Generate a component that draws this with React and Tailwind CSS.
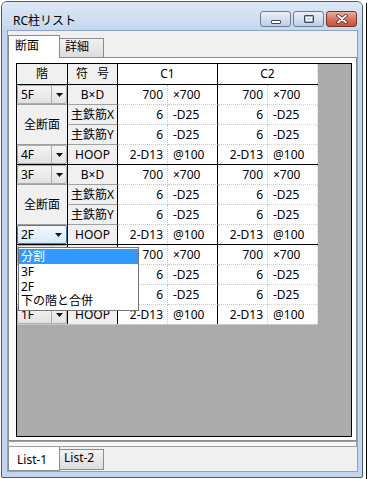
import React from "react";

const rows = [
  ["B×D", "700", "×700", "700", "×700"],
  ["主鉄筋X", "6", "-D25", "6", "-D25"],
  ["主鉄筋Y", "6", "-D25", "6", "-D25"],
  ["HOOP", "2-D13", "@100", "2-D13", "@100"],
];

// the third group sits under the open dropdown, so its left labels are hidden there
const groups = [
  { top: "5F", bottom: "4F", label: "全断面" },
  { top: "3F", bottom: "2F", focused: true, label: "全断面" },
  { top: "", bottom: "1F", end: true, label: "", covered: true },
];

const Arrow = () => (
  <svg width="7" height="4" viewBox="0 0 7 4">
    <path d="M0 0h7L3.5 4z" fill="#111" />
  </svg>
);

const Combo = ({ value, focused }) => (
  <div
    className={
      focused
        ? "h-full flex items-center border border-[#3c7fb1] rounded-[2px] bg-linear-to-b from-[#f3f9fe] to-[#d3e9f9]"
        : "h-full flex items-center border border-[#acacac] rounded-[2px] bg-linear-to-b from-[#f5f5f5] to-[#e2e2e2]"
    }
  >
    <span className="flex-1 pl-[3px] text-[12px] leading-[14px]">{value}</span>
    <span
      className={
        focused
          ? "w-[15px] h-full flex items-center justify-center"
          : "w-[15px] h-full flex items-center justify-center border-l border-[#acacac]"
      }
    >
      <Arrow />
    </span>
  </div>
);

const DataRow = ({ r, last, hideLabel }) => (
  <div className={last ? "flex h-[19px]" : "flex h-[20px]"}>
    <div
      className={
        "w-[50px] flex items-center justify-center bg-[#f0f0f0] border-r border-r-black border-b-[#a0a0a0] " +
        (last ? "" : "border-b")
      }
    >
      {hideLabel ? "" : r[0]}
    </div>
    <div
      className={
        "w-[50px] flex items-center justify-end pr-[4px] bg-white border-r border-[#c8c8c8] border-dotted " +
        (last ? "" : "border-b")
      }
    >
      {r[1]}
    </div>
    <div
      className={
        "w-[50px] flex items-center pl-[5px] bg-white border-r border-r-black border-b-[#c8c8c8] [border-bottom-style:dotted] " +
        (last ? "" : "border-b")
      }
    >
      {r[2]}
    </div>
    <div
      className={
        "w-[50px] flex items-center justify-end pr-[4px] bg-white border-r border-[#c8c8c8] border-dotted " +
        (last ? "" : "border-b")
      }
    >
      {r[3]}
    </div>
    <div
      className={
        "w-[50px] flex items-center pl-[5px] bg-white border-r border-[#d0d0d0] border-dotted " +
        (last ? "" : "border-b")
      }
    >
      {r[4]}
    </div>
  </div>
);

const Group = ({ g }) => (
  <div
    className={
      g.end
        ? "flex h-[80px] border-b border-[#c8c8c8]"
        : "flex h-[80px] border-b border-black"
    }
  >
    <div className="w-[51px] flex flex-col bg-[#f0f0f0] border-r border-black">
      <div className="h-[20px] border-b border-[#a0a0a0]">
        <Combo value={g.top} />
      </div>
      <div className="h-[40px] flex items-center justify-center border-b border-[#a0a0a0]">
        {g.label}
      </div>
      <div className="h-[19px]">
        <Combo value={g.bottom} focused={g.focused} />
      </div>
    </div>
    <div className="flex flex-col">
      {rows.map((r, i) => (
        <DataRow key={i} r={r} last={i === 3} hideLabel={g.covered && i < 3} />
      ))}
    </div>
  </div>
);

const TitleButton = ({ kind }) => {
  if (kind === "close") {
    return (
      <div className="w-[31px] h-[16px] rounded-[3px] border border-[#7b3328] bg-linear-to-b from-[#eab1a5] via-[#d77462] to-[#c4513b] flex items-center justify-center">
        <svg width="12" height="10" viewBox="0 0 12 10">
          <path d="M2 1.5l8 7M10 1.5l-8 7" stroke="#5a2018" strokeWidth="3.4" strokeLinecap="round" />
          <path d="M2 1.5l8 7M10 1.5l-8 7" stroke="#fff" strokeWidth="1.8" strokeLinecap="round" />
        </svg>
      </div>
    );
  }
  return (
    <div className="w-[31px] h-[16px] rounded-[3px] border border-[#6b7c93] bg-linear-to-b from-[#e8eff8] to-[#bfd0e5] flex items-center justify-center">
      {kind === "min" ? (
        <div className="mt-[6px] w-[10px] h-[4px] border border-[#3d4a5c] bg-white rounded-[1px]" />
      ) : (
        <div className="w-[10px] h-[8px] border border-[#3d4a5c] bg-[#9fb3cc] flex items-center justify-center rounded-[1px]">
          <div className="w-[6px] h-[4px] border border-white bg-[#c5d4e6]" />
        </div>
      )}
    </div>
  );
};

export default function App() {
  return (
    <div className="w-[368px] h-[479px] bg-white flex font-['Noto_Sans','Noto_Sans_CJK_JP',sans-serif] text-black text-[12px]">
      <div className="ml-[1px] mt-[1px] w-[362px] h-[477px] flex flex-col border border-[#4b5b70] rounded-t-[6px] rounded-b-[2px] bg-[#c3d6ee] overflow-hidden">
        {/* title bar */}
        <div className="h-[28px] flex items-start bg-linear-to-b from-[#dde8f5] to-[#c6d8ee]">
          <span className="ml-[11px] mt-[12px] text-[12px] leading-[14px]">RC柱リスト</span>
          <div className="ml-auto mr-[5px] mt-[9px] flex gap-[2px]">
            <TitleButton kind="min" />
            <TitleButton kind="max" />
            <TitleButton kind="close" />
          </div>
        </div>

        {/* client */}
        <div className="ml-[5px] mr-[4px] h-[442px] border border-[#8da4c0] bg-[#f0f0f0] flex flex-col">
          <div className="pt-[4px]">
            <div className="h-[23px] -mb-px flex items-end relative z-10">
              <div className="w-[52px] h-[23px] bg-white border-x border-t border-[#898c95] pl-[6px] pt-[3px] leading-[14px]">
                断面
              </div>
              <div className="w-[44px] h-[20px] border-t border-r border-b border-[#898c95] bg-linear-to-b from-[#f3f3f3] to-[#dcdcdc] pl-[5px] pt-px leading-[14px]">
                詳細
              </div>
            </div>
          </div>

          <div className="h-[384px] bg-white border border-[#898c95] pl-[7px] pt-[5px]">
            <div className="w-[336px] h-[374px] border border-black bg-[#ababab] relative leading-[14px]">
              <div className="w-[301px] flex flex-col">
                <div className="flex h-[21px] border-b border-black">
                  <div className="w-[51px] flex items-center justify-center bg-[#f0f0f0] border-r border-black">階</div>
                  <div className="w-[50px] flex items-center justify-center gap-[9px] bg-[#f0f0f0] border-r border-black">
                    <span>符</span>
                    <span>号</span>
                  </div>
                  <div className="w-[100px] flex items-center justify-center bg-white border-r border-black">C1</div>
                  <div className="w-[100px] flex items-center justify-center bg-white border-r border-[#d0d0d0] border-dotted">C2</div>
                </div>
                {groups.map((g, i) => (
                  <Group key={i} g={g} />
                ))}
              </div>

              {/* open dropdown of the 2F combo */}
              <div className="absolute left-[1px] top-[183px] w-[121px] h-[64px] bg-white border border-[#767676] py-px flex flex-col">
                <div className="h-[15px] bg-[#3399ff] text-white pl-[2px] pt-px leading-[14px]">分割</div>
                <div className="h-[15px] pl-[2px] pt-px leading-[14px]">3F</div>
                <div className="h-[15px] pl-[2px] pt-px leading-[14px]">2F</div>
                <div className="h-[15px] pl-[2px] leading-[14px]">下の階と合併</div>
              </div>
            </div>
          </div>

          <div className="h-[6px] border border-[#a0a0a0] bg-[#f7f7f7]" />

          <div className="h-[24px] flex items-start">
            <div className="w-[52px] h-[24px] bg-white border-x border-b border-[#898c95] pl-[8px] pt-[6px] leading-[14px]">
              List-1
            </div>
            <div className="w-[44px] h-[21px] mt-[2px] border-t border-r border-b border-[#898c95] bg-linear-to-b from-[#f3f3f3] to-[#dcdcdc] pl-[4px] pt-px leading-[14px]">
              List-2
            </div>
          </div>
        </div>
      </div>
      <div className="ml-[3px] mt-[3px] w-px h-[476px] bg-black" />
    </div>
  );
}
